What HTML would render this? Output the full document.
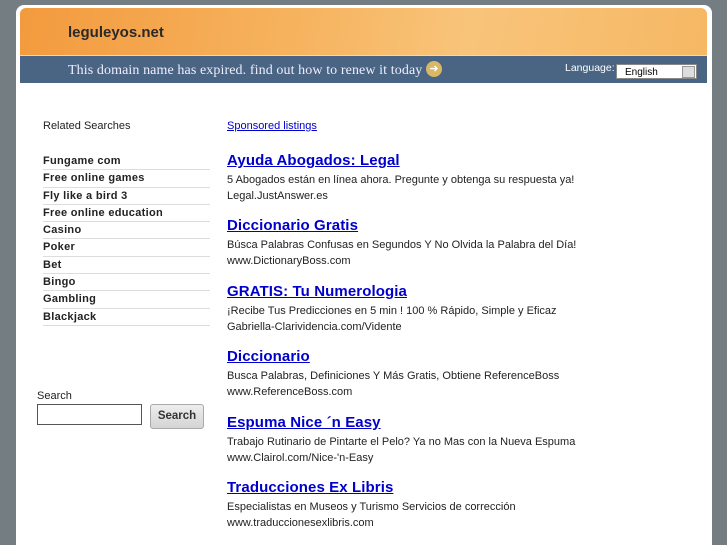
<html style="overflow:hidden;height:545px"><head><style>
body{margin:0;width:727px;height:545px;background:#737d82;font-family:"Liberation Sans",sans-serif;position:relative;overflow:hidden}
.panel{position:absolute;left:16px;top:5px;width:696px;height:540px;background:#fff;border-radius:8px 8px 0 0}
.hdr{position:absolute;left:20px;top:8px;width:687px;height:47px;border-radius:6px 6px 0 0;background:linear-gradient(100deg,#f39a3e 0%,#f6b35e 40%,#f8c47a 65%,#f6b864 100%)}
.hdr span{position:absolute;left:48px;top:16px;font-size:15px;font-weight:bold;color:#2a2a2a}
.bar{position:absolute;left:20px;top:55px;width:687px;height:27px;background:#4a6483;border-top:1px solid #f4d8a8}
.bar .t{position:absolute;left:48px;top:7px;font-family:"Liberation Serif",serif;font-size:14px;color:#eef;letter-spacing:.1px}
.arr{position:absolute;left:406px;top:5px;width:16px;height:16px;border-radius:50%;background:#d8b866;color:#fff;font-size:11px;text-align:center;line-height:16px}
.lang{position:absolute;left:545px;top:6px;font-size:10.5px;color:#fff}
.sel{position:absolute;left:596px;top:8px;width:81px;height:15px;background:#fff;border:1px solid #888;font-size:10px;line-height:15px;padding-left:8px;box-sizing:border-box}
.sel i{position:absolute;right:1px;top:1px;width:11px;height:10px;background:#ddd;border:1px solid #999}
.rs{position:absolute;left:43px;top:120px;font-size:11px;color:#222}
ul{position:absolute;left:43px;top:153px;width:167px;margin:0;padding:0;list-style:none}
li{font-size:11px;font-weight:bold;color:#222;height:16.3px;line-height:16px;border-bottom:1px solid #ddd;letter-spacing:.3px}
.sl{position:absolute;left:37px;top:390px;font-size:11px;color:#222}
.inp{position:absolute;left:37px;top:404px;width:105px;height:21px;border:1px solid #555;box-sizing:border-box}
.btn{position:absolute;left:150px;top:404px;width:54px;height:25px;border:1px solid #aaa;border-radius:3px;background:linear-gradient(#eee,#d4d4d4);font-size:11.5px;font-weight:bold;color:#333;text-align:center;line-height:23px;box-sizing:border-box}
.sp{position:absolute;left:227px;top:120px;font-size:11px;color:#00c;text-decoration:underline}
.ad{position:absolute;left:227px}
.ad a{display:block;font-size:15px;font-weight:bold;color:#00c;text-decoration:underline;height:21px;letter-spacing:.1px}
.ad div{font-size:11px;color:#222;line-height:15.5px}
</style></head><body>
<div class="panel"></div>
<div class="hdr"><span>leguleyos.net</span></div>
<div class="bar"><div class="t">This domain name has expired. find out how to renew it today</div><div class="arr">➜</div><div class="lang">Language:</div><div class="sel">English<i></i></div></div>
<div class="rs">Related Searches</div>
<ul><li>Fungame com</li><li>Free online games</li><li>Fly like a bird 3</li><li>Free online education</li><li>Casino</li><li>Poker</li><li>Bet</li><li>Bingo</li><li>Gambling</li><li>Blackjack</li></ul>
<div class="sl">Search</div><div class="inp"></div><div class="btn">Search</div>
<div class="sp">Sponsored listings</div>
<div class="ad" style="top:152px"><a>Ayuda Abogados: Legal</a><div>5 Abogados están en línea ahora. Pregunte y obtenga su respuesta ya!<br>Legal.JustAnswer.es</div></div>
<div class="ad" style="top:217px"><a>Diccionario Gratis</a><div>Búsca Palabras Confusas en Segundos Y No Olvida la Palabra del Día!<br>www.DictionaryBoss.com</div></div>
<div class="ad" style="top:283px"><a>GRATIS: Tu Numerologia</a><div>¡Recibe Tus Predicciones en 5 min ! 100 % Rápido, Simple y Eficaz<br>Gabriella-Clarividencia.com/Vidente</div></div>
<div class="ad" style="top:348px"><a>Diccionario</a><div>Busca Palabras, Definiciones Y Más Gratis, Obtiene ReferenceBoss<br>www.ReferenceBoss.com</div></div>
<div class="ad" style="top:414px"><a>Espuma Nice ´n Easy</a><div>Trabajo Rutinario de Pintarte el Pelo? Ya no Mas con la Nueva Espuma<br>www.Clairol.com/Nice-'n-Easy</div></div>
<div class="ad" style="top:479px"><a>Traducciones Ex Libris</a><div>Especialistas en Museos y Turismo Servicios de corrección<br>www.traduccionesexlibris.com</div></div>
</body></html>
